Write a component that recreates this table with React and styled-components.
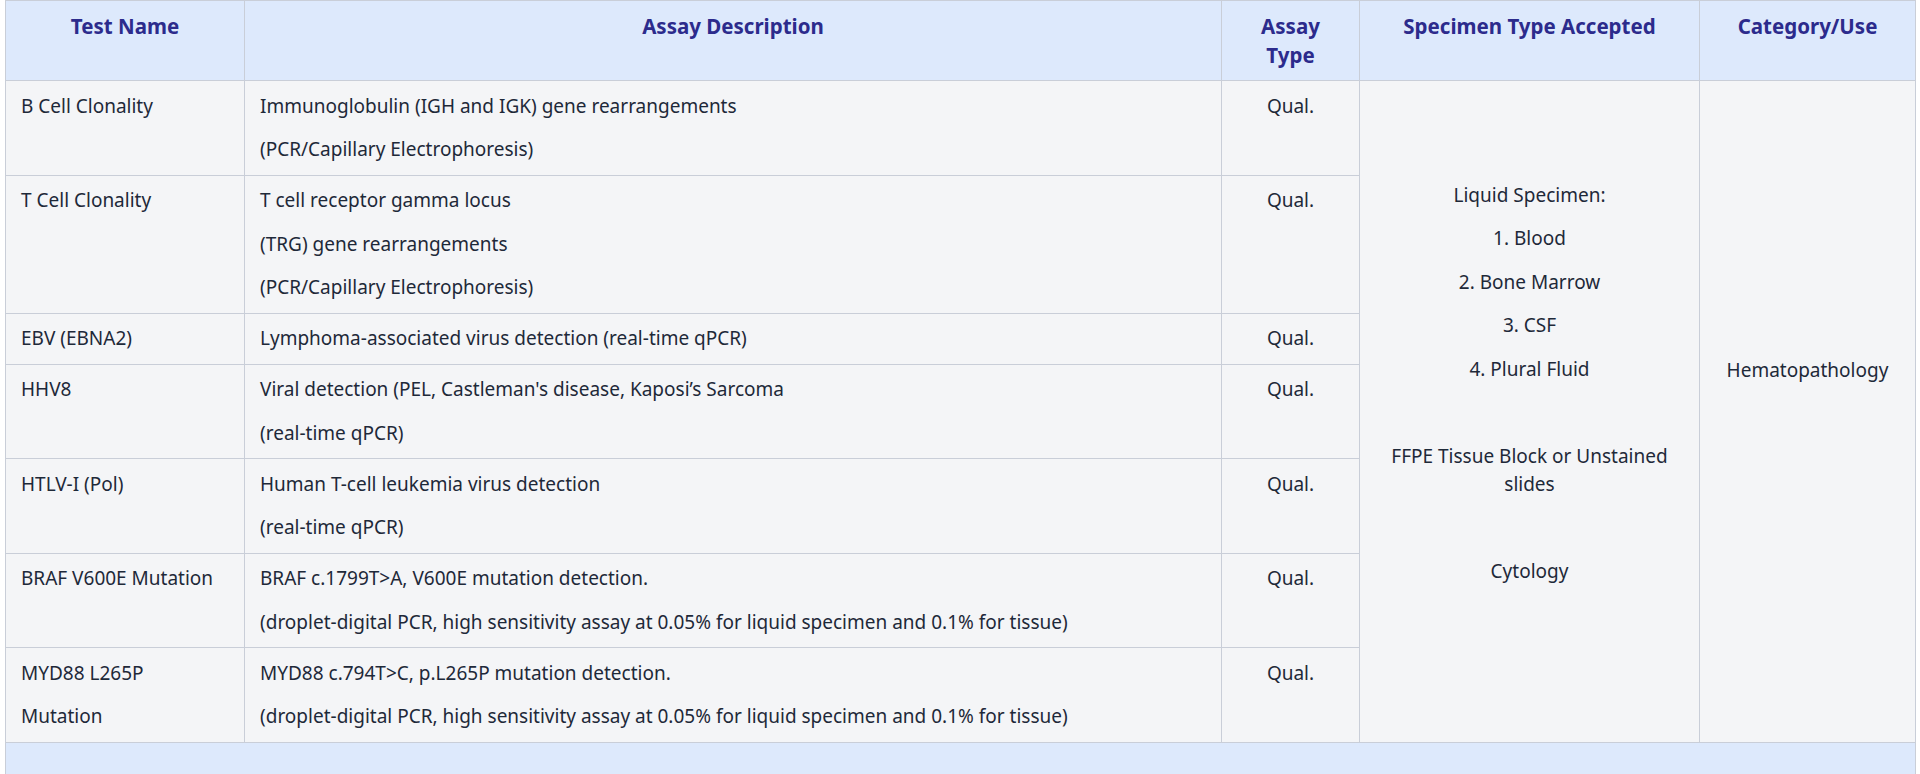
import styled, { createGlobalStyle } from "styled-components";

const GlobalStyle = createGlobalStyle`
  html, body {
    margin: 0;
    padding: 0;
    background: #ffffff;
  }
  body {
    font-family: "Noto Sans", "Open Sans", sans-serif;
    color: #1e2939;
  }
`;

const Page = styled.div`
  padding: 0 5px;
`;

const Table = styled.table`
  width: 1910px;
  table-layout: fixed;
  border-collapse: collapse;
  font-size: 19px;
  line-height: 28.5px;
`;

const Head = styled.th`
  background: #dde9fc;
  color: #2c2b8c;
  font-size: 20.5px;
  font-weight: 700;
  text-align: center;
  vertical-align: top;
  padding: 11px 15px;
  border: 1px solid #c9ced8;
`;

const Cell = styled.td`
  background: #f4f5f7;
  vertical-align: top;
  text-align: ${(p) => (p.$center ? "center" : "left")};
  padding: ${(p) => (p.$offset ? `${p.$offset}px` : "3px")} 15px 3.5px;
  border: 1px solid #c9ced8;
`;

const Line = styled.p`
  margin: 0;
  padding: 7.5px 0;
  min-height: 28.5px;
`;

const FootCell = styled.td`
  background: #dde9fc;
  height: 44px;
  border: 1px solid #c9ced8;
`;

const cols = [239, 977, 138, 340, 216];

const heads = [
  ["Test Name"],
  ["Assay Description"],
  ["Assay", "Type"],
  ["Specimen Type Accepted"],
  ["Category/Use"],
];

const pcrNote =
  "(droplet-digital PCR, high sensitivity assay at 0.05% for liquid specimen and 0.1% for tissue)";

const rows = [
  {
    name: ["B Cell Clonality"],
    desc: ["Immunoglobulin (IGH and IGK) gene rearrangements", "(PCR/Capillary Electrophoresis)"],
  },
  {
    name: ["T Cell Clonality"],
    desc: ["T cell receptor gamma locus", "(TRG) gene rearrangements", "(PCR/Capillary Electrophoresis)"],
  },
  {
    name: ["EBV (EBNA2)"],
    desc: ["Lymphoma-associated virus detection (real-time qPCR)"],
  },
  {
    name: ["HHV8"],
    desc: ["Viral detection (PEL, Castleman's disease, Kaposi\u2019s Sarcoma", "(real-time qPCR)"],
  },
  {
    name: ["HTLV-I (Pol)"],
    desc: ["Human T-cell leukemia virus detection", "(real-time qPCR)"],
  },
  {
    name: ["BRAF V600E Mutation"],
    desc: ["BRAF c.1799T>A, V600E mutation detection.", pcrNote],
  },
  {
    name: ["MYD88 L265P", "Mutation"],
    desc: ["MYD88 c.794T>C, p.L265P mutation detection.", pcrNote],
  },
];

const specimen = [
  "Liquid Specimen:",
  "1. Blood",
  "2. Bone Marrow",
  "3. CSF",
  "4. Plural Fluid",
  "",
  "FFPE Tissue Block or Unstained slides",
  "",
  "Cytology",
];

const Lines = ({ items }) =>
  items.map((t, i) => <Line key={i}>{t}</Line>);

export default function App() {
  return (
    <Page>
      <GlobalStyle />
      <Table>
        <colgroup>
          {cols.map((w, i) => (
            <col key={i} style={{ width: w }} />
          ))}
        </colgroup>
        <thead>
          <tr>
            {heads.map((h, i) => (
              <Head key={i}>
                {h.map((part, j) => (
                  <span key={j}>
                    {j > 0 && <br />}
                    {part}
                  </span>
                ))}
              </Head>
            ))}
          </tr>
        </thead>
        <tbody>
          {rows.map((r, i) => (
            <tr key={i}>
              <Cell>
                <Lines items={r.name} />
              </Cell>
              <Cell>
                <Lines items={r.desc} />
              </Cell>
              <Cell $center>
                <Line>Qual.</Line>
              </Cell>
              {i === 0 && (
                <>
                  <Cell $center $offset={92} rowSpan={rows.length}>
                    <Lines items={specimen} />
                  </Cell>
                  <Cell $center $offset={267} rowSpan={rows.length}>
                    <Line>Hematopathology</Line>
                  </Cell>
                </>
              )}
            </tr>
          ))}
        </tbody>
        <tfoot>
          <tr>
            <FootCell colSpan={5} />
          </tr>
        </tfoot>
      </Table>
    </Page>
  );
}
